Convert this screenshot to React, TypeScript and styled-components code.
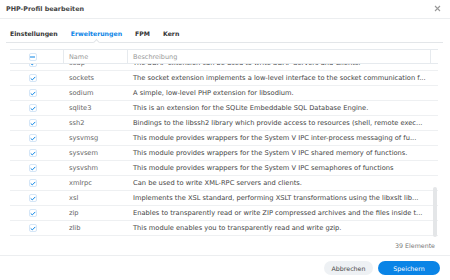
import React from "react";
import styled, { createGlobalStyle } from "styled-components";

const GlobalStyle = createGlobalStyle`
  html, body { margin: 0; padding: 0; background: #fff; }
  body { font-family: "DejaVu Sans", Verdana, sans-serif; color: #333; }
`;

const Dialog = styled.div`
  width: 450px;
  height: 280px;
  display: flex;
  flex-direction: column;
  background: #fff;
  overflow: hidden;
`;

const Header = styled.div`
  height: 19px;
  box-sizing: border-box;
  border-bottom: 1px solid #eceef0;
  display: flex;
  align-items: center;
  justify-content: space-between;
  padding: 0 9px 1px 6px;
`;

const Title = styled.div`
  font-size: 6.4px;
  font-weight: bold;
  color: #444;
`;

const CloseBtn = styled.div`
  width: 7px;
  height: 7px;
  display: flex;
  align-items: center;
  justify-content: center;
  svg { display: block; }
`;

const Tabs = styled.div`
  margin: 0 7px 0 6px;
  height: 24px;
  box-sizing: border-box;
  border-bottom: 1px solid #e3e6e9;
  display: flex;
  align-items: flex-end;
  gap: 13px;
  padding: 0 0 5px 4px;
`;

const Tab = styled.div<{ $active?: boolean }>`
  position: relative;
  font-size: 6.2px;
  font-weight: bold;
  color: ${p => (p.$active ? "#0a84e6" : "#333")};
  &::after {
    content: "";
    display: ${p => (p.$active ? "block" : "none")};
    position: absolute;
    left: 50%;
    bottom: -8px;
    width: 4px;
    height: 4px;
    margin-left: -2px;
    background: #fff;
    border-top: 1px solid #e3e6e9;
    border-left: 1px solid #e3e6e9;
    transform: rotate(45deg);
  }
`;

const TableWrap = styled.div`
  margin: 6px 12px 0 10px;
  position: relative;
`;

const HeadRow = styled.div`
  display: grid;
  grid-template-columns: 54px 64px 1fr 7px;
  height: 15px;
  box-sizing: border-box;
  border-top: 1px solid #e6eaee;
  border-bottom: 1px solid #e6eaee;
  position: relative;
  z-index: 2;
  background: #fff;
`;

const HeadCell = styled.div<{ $divider?: boolean }>`
  display: flex;
  align-items: center;
  font-size: 6.5px;
  color: #999;
  padding-left: 5px;
  border-right: ${p => (p.$divider ? "1px solid #e6eaee" : "none")};
`;

const CheckCell = styled.div<{ $divider?: boolean }>`
  display: flex;
  align-items: center;
  justify-content: center;
  padding-right: 8px;
  border-right: ${p => (p.$divider ? "1px solid #e6eaee" : "none")};
`;

const Box = styled.div`
  width: 8px;
  height: 8px;
  box-sizing: border-box;
  border: 1px solid #d5e6f7;
  border-radius: 2px;
  background: #fff;
  display: flex;
  align-items: center;
  justify-content: center;
  svg { display: block; }
`;

const Body = styled.div`
  height: 188px;
  overflow: hidden;
  position: relative;
  margin-top: -15px;
`;

const List = styled.div`
  margin-top: 7px;
`;

const Row = styled.div`
  display: grid;
  grid-template-columns: 54px 64px 1fr 7px;
  height: 15px;
  box-sizing: border-box;
  border-bottom: 1px solid #eef0f2;
`;

const Cell = styled.div<{ $dim?: boolean }>`
  font-size: 6.7px;
  line-height: 14px;
  padding-left: 5px;
  white-space: nowrap;
  overflow: hidden;
  text-overflow: ellipsis;
  color: ${p => (p.$dim ? "#666" : "#444")};
`;

const Thumb = styled.div`
  position: absolute;
  right: 1px;
  top: 138px;
  width: 4px;
  height: 50px;
  border-radius: 2px;
  background: #e4e6e8;
`;

const Count = styled.div`
  text-align: right;
  font-size: 6.3px;
  color: #777;
  padding: 5px 3px 0 0;
`;

const Footer = styled.div`
  margin-top: auto;
  height: 25px;
  box-sizing: border-box;
  border-top: 1px solid #eceef0;
  display: flex;
  align-items: center;
  justify-content: flex-end;
  gap: 5px;
  padding: 0 10px 0 0;
`;

const Button = styled.div<{ $primary?: boolean }>`
  height: 14px;
  width: ${p => (p.$primary ? "62px" : "49px")};
  border-radius: 7px;
  display: flex;
  align-items: center;
  justify-content: center;
  font-size: 6.3px;
  background: ${p => (p.$primary ? "#0a84e6" : "#eef1f4")};
  color: ${p => (p.$primary ? "#fff" : "#444")};
`;

const rows: [string, string][] = [
  ["soap", "The SOAP extension can be used to write SOAP Servers and Clients."],
  ["sockets", "The socket extension implements a low-level interface to the socket communication f..."],
  ["sodium", "A simple, low-level PHP extension for libsodium."],
  ["sqlite3", "This is an extension for the SQLite Embeddable SQL Database Engine."],
  ["ssh2", "Bindings to the libssh2 library which provide access to resources (shell, remote exec..."],
  ["sysvmsg", "This module provides wrappers for the System V IPC inter-process messaging of fu..."],
  ["sysvsem", "This module provides wrappers for the System V IPC shared memory of functions."],
  ["sysvshm", "This module provides wrappers for the System V IPC semaphores of functions"],
  ["xmlrpc", "Can be used to write XML-RPC servers and clients."],
  ["xsl", "Implements the XSL standard, performing XSLT transformations using the libxslt lib..."],
  ["zip", "Enables to transparently read or write ZIP compressed archives and the files inside t..."],
  ["zlib", "This module enables you to transparently read and write gzip."],
];

const Check = () => (
  <Box>
    <svg width="6" height="5" viewBox="0 0 6 5">
      <path d="M0.7 2.4 L2.3 3.9 L5.3 0.9" fill="none" stroke="#0a84e6" strokeWidth="1" />
    </svg>
  </Box>
);

const Minus = () => (
  <Box>
    <svg width="5" height="2" viewBox="0 0 5 2">
      <rect x="0" y="0.5" width="5" height="1" fill="#0a84e6" />
    </svg>
  </Box>
);

export default function App() {
  return (
    <>
      <GlobalStyle />
      <Dialog>
        <Header>
          <Title>PHP-Profil bearbeiten</Title>
          <CloseBtn>
            <svg width="7" height="7" viewBox="0 0 7 7">
              <path d="M1 1 L6 6 M6 1 L1 6" stroke="#999" strokeWidth="1.1" />
            </svg>
          </CloseBtn>
        </Header>
        <Tabs>
          <Tab>Einstellungen</Tab>
          <Tab $active>Erweiterungen</Tab>
          <Tab>FPM</Tab>
          <Tab>Kern</Tab>
        </Tabs>
        <TableWrap>
          <HeadRow>
            <CheckCell $divider>
              <Minus />
            </CheckCell>
            <HeadCell $divider>Name</HeadCell>
            <HeadCell $divider>Beschreibung</HeadCell>
            <HeadCell />
          </HeadRow>
          <Body>
            <List>
              {rows.map(([name, desc]) => (
                <Row key={name}>
                  <CheckCell>
                    <Check />
                  </CheckCell>
                  <Cell $dim>{name}</Cell>
                  <Cell>{desc}</Cell>
                  <div />
                </Row>
              ))}
            </List>
            <Thumb />
          </Body>
          <Count>39 Elemente</Count>
        </TableWrap>
        <Footer>
          <Button>Abbrechen</Button>
          <Button $primary>Speichern</Button>
        </Footer>
      </Dialog>
    </>
  );
}
